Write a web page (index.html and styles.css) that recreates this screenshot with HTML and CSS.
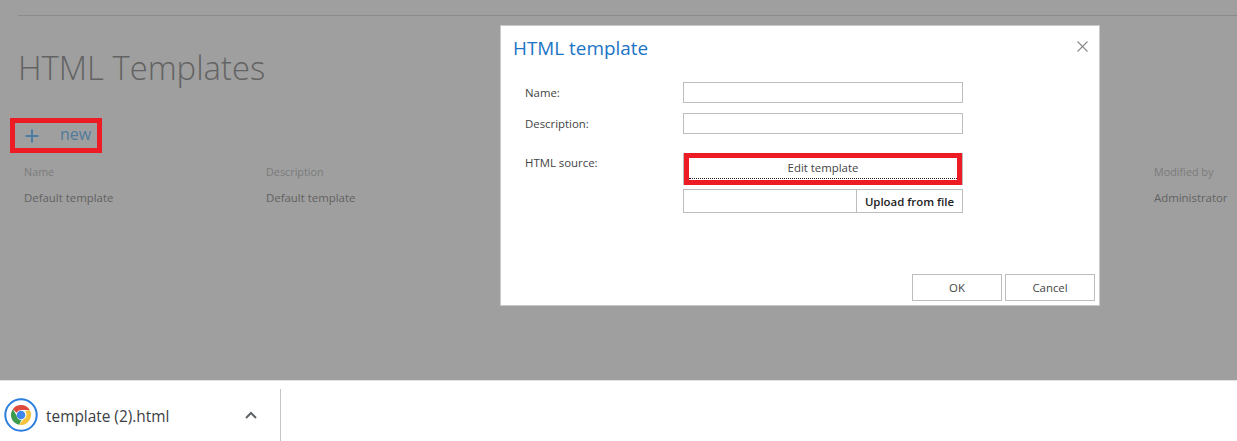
FILE: index.html
```html
<!DOCTYPE html>
<html lang="en">
<head>
<meta charset="utf-8">
<title>HTML Templates</title>
<link rel="stylesheet" href="styles.css">
</head>
<body>
<main class="page">
  <div class="rule"></div>
  <h1 class="page-title">HTML Templates</h1>
  <div class="new-box"><span class="plus"><svg width="14" height="14" viewBox="0 0 14 14"><path d="M7 0.5V13.5M0.5 7H13.5" stroke="#4f7a9c" stroke-width="2" fill="none"/></svg></span><span class="new-label">new</span></div>
  <div class="table-row table-head"><span>Name</span><span>Description</span><span>Modified by</span></div>
  <div class="table-row table-body"><span>Default template</span><span>Default template</span><span>Administrator</span></div>
</main>

<section class="dialog">
  <header class="dialog-head">
    <h2 class="dialog-title">HTML template</h2>
    <svg class="close" width="11" height="11" viewBox="0 0 11 11"><path d="M0.5 0.5L10.5 10.5M10.5 0.5L0.5 10.5" stroke="#8a8a8a" stroke-width="1.1" fill="none"/></svg>
  </header>
  <div class="form">
    <label class="field-label">Name:</label><div class="input"></div>
    <label class="field-label">Description:</label><div class="input"></div>
    <label class="field-label source-label">HTML source:</label>
    <div class="source">
      <div class="edit-btn"><span class="edit-inner">Edit template</span></div>
      <div class="upload"><div class="upload-name"></div><div class="upload-btn">Upload from file</div></div>
    </div>
  </div>
  <footer class="dialog-foot">
    <div class="btn">OK</div>
    <div class="btn">Cancel</div>
  </footer>
</section>

<footer class="shelf">
  <div class="download">
    <svg class="chrome" width="34" height="34" viewBox="0 0 34 34">
      <circle cx="17" cy="17" r="15.7" fill="#fff" stroke="#2b7de0" stroke-width="2"/>
      <path d="M17 7A10 10 0 0 1 25.7 12H17A5 5 0 0 0 12.5 14.8L8.8 11.2A10 10 0 0 1 17 7Z" fill="#dd4a3c"/>
      <path d="M8.8 11.2L12.6 17.5A5 5 0 0 0 17.5 22L15.2 26.8A10 10 0 0 1 8.8 11.2Z" fill="#3c9a4f"/>
      <path d="M25.7 12A10 10 0 0 1 15.2 26.8L19.5 21.3A5 5 0 0 0 21 13Z" fill="#f5c33b"/>
      <circle cx="17" cy="17" r="4.3" fill="#3f86ec"/>
    </svg>
    <span class="file-name">template (2).html</span>
    <svg class="chev" width="12" height="8" viewBox="0 0 12 8"><path d="M1 7L6 2L11 7" stroke="#5f6368" stroke-width="2" fill="none"/></svg>
  </div>
</footer>
</body>
</html>
```
FILE: styles.css
```css
* { box-sizing: border-box; }
html, body { margin: 0; padding: 0; }
body {
  width: 1237px;
  height: 441px;
  overflow: hidden;
  font-family: "Open Sans", "Noto Sans", sans-serif;
  display: flex;
  flex-direction: column;
  background: #fff;
}
.page {
  height: 380px;
  background: #9f9f9f;
  padding: 15px 0 0 18px;
}
.rule { height: 1px; background: #8b8b8b; }
.page-title {
  margin: 26px 0 0 0;
  font-size: 32.8px;
  line-height: 52px;
  font-weight: 300;
  color: #636363;
}
.new-box {
  margin: 24px 0 0 -8px;
  width: 92px;
  height: 35px;
  border: 5px solid #ed1c24;
  display: flex;
  align-items: center;
  padding-left: 10px;
}
.plus { display: flex; width: 35px; }
.new-label { font-size: 16px; line-height: 20px; color: #4f7a9c; margin-top: -4px; }
.table-row {
  display: grid;
  grid-template-columns: 242px 888px 1fr;
  padding-left: 6px;
  white-space: nowrap;
}
.table-head { margin-top: 10px; font-size: 10.8px; line-height: 18px; color: #7b7b7b; }
.table-body { margin-top: 8px; font-size: 11.4px; line-height: 18px; color: #626262; }

.dialog {
  position: absolute;
  left: 500px;
  top: 25px;
  width: 600px;
  height: 281px;
  background: #fff;
  border: 1px solid #c9c9c9;
  display: flex;
  flex-direction: column;
}
.dialog-head {
  display: flex;
  justify-content: space-between;
  align-items: flex-start;
  padding: 9px 11px 0 12px;
  height: 56px;
}
.dialog-title {
  margin: 0;
  font-size: 18.9px;
  line-height: 26px;
  font-weight: 400;
  color: #1b74c4;
}
.close { margin-top: 6px; }
.form {
  display: grid;
  grid-template-columns: 158px 280px;
  grid-auto-rows: min-content;
  row-gap: 10px;
  padding-left: 24px;
  font-size: 11.4px;
  color: #444;
}
.field-label { height: 21px; line-height: 21px; }
.input { height: 21px; border: 1px solid #bdbdbd; }
.source-label { margin-top: 8px; }
.source { margin-top: 9px; display: flex; flex-direction: column; gap: 4px; }
.edit-btn {
  height: 32px;
  border: 5px solid #ed1c24;
  margin: 0 1px;
  background: #fff;
  box-shadow: -1px 0 0 #bdbdbd, 1px 0 0 #bdbdbd;
}
.edit-inner {
  display: block;
  height: 21px;
  text-align: center;
  line-height: 20px;
  border-bottom: 1px dotted #222;
  color: #444;
}
.upload { display: flex; height: 24px; border: 1px solid #bdbdbd; }
.upload-name { width: 173px; border-right: 1px solid #bdbdbd; }
.upload-btn {
  flex: 1;
  text-align: center;
  line-height: 23px;
  font-weight: 600;
  color: #222;
  white-space: nowrap;
}
.dialog-foot {
  margin-top: auto;
  display: flex;
  justify-content: flex-end;
  gap: 3px;
  padding: 0 4px 4px 0;
}
.btn {
  width: 90px;
  height: 27px;
  border: 1px solid #bdbdbd;
  text-align: center;
  font-size: 11.4px;
  line-height: 26px;
  color: #444;
}

.shelf {
  flex: 1;
  background: #fff;
  border-top: 1px solid #e2e2e2;
  padding-top: 8px;
}
.download {
  width: 281px;
  height: 52px;
  border-right: 1px solid #c4c4c4;
  display: flex;
  align-items: center;
  padding-left: 4px;
}
.chrome { flex: none; }
.file-name { margin: 2px 0 0 8px; font-size: 15.4px; color: #3c4043; white-space: nowrap; }
.chev { margin-left: 76px; }
```
